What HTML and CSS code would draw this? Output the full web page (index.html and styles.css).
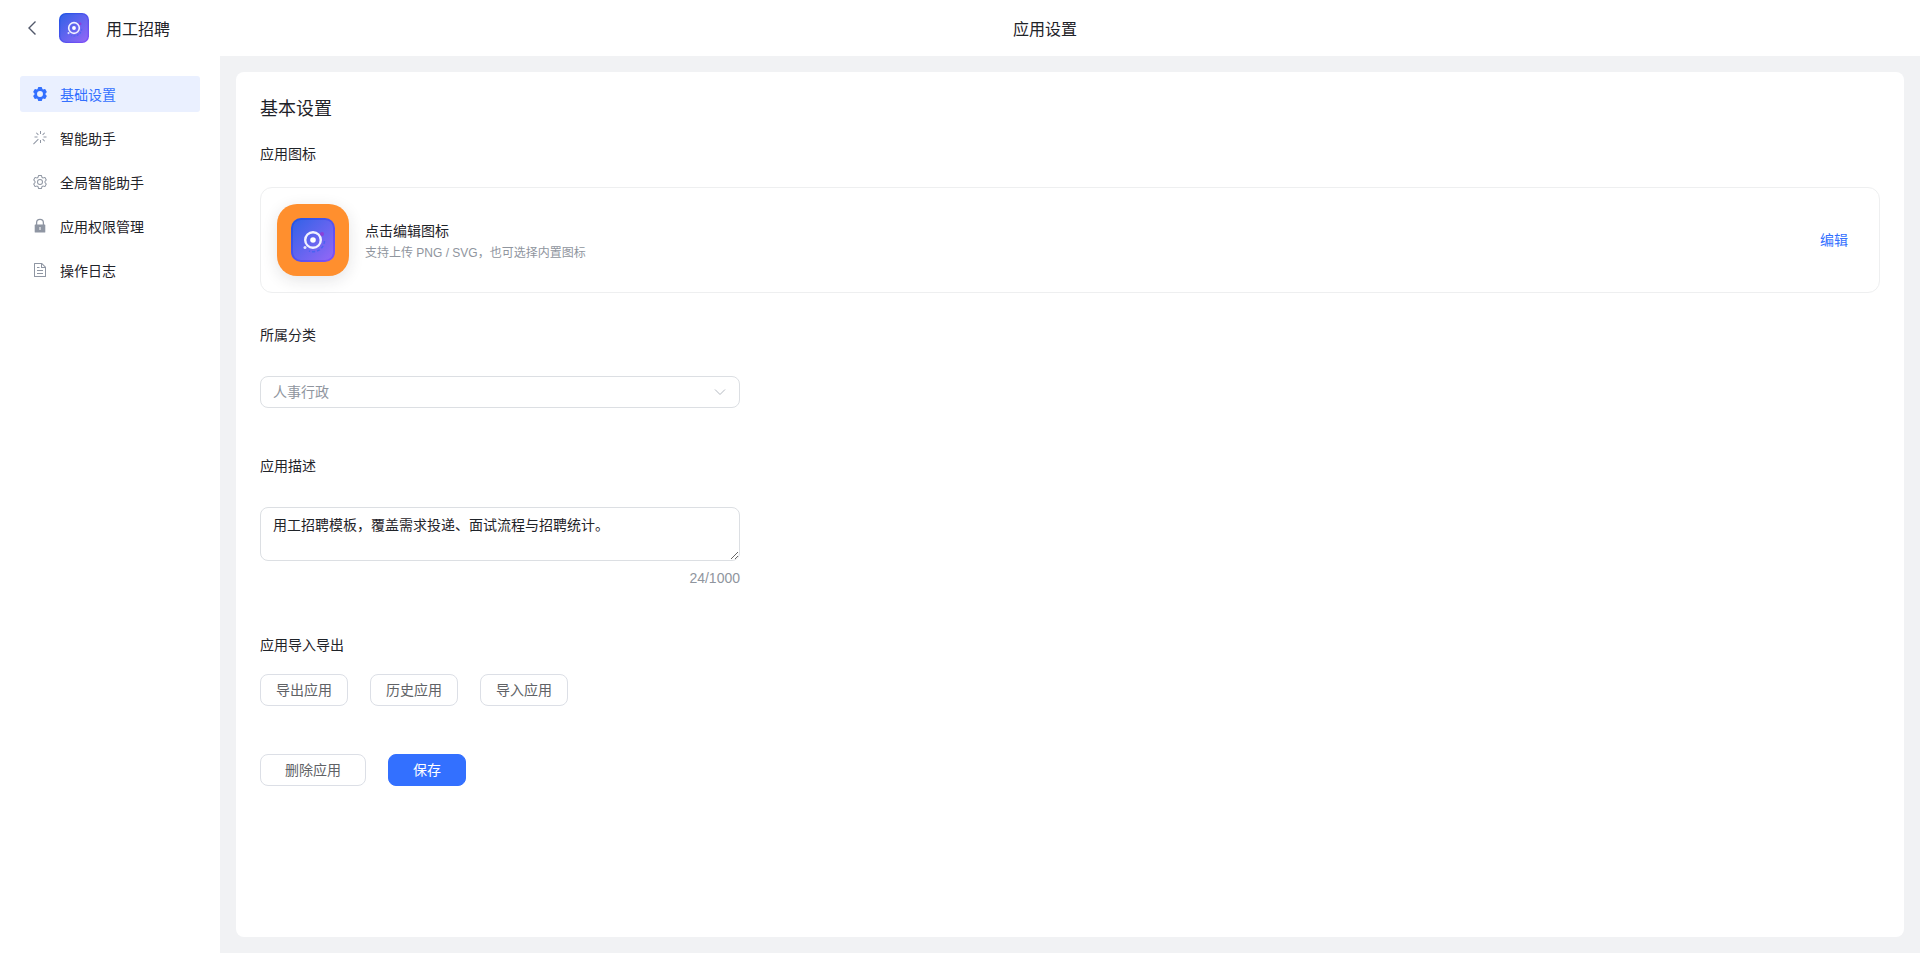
FILE: index.html
```html
<!DOCTYPE html>
<html lang="zh-CN">
<head>
<meta charset="utf-8">
<title>应用设置</title>
<link rel="stylesheet" href="styles.css">
</head>
<body>
<svg class="defs" aria-hidden="true">
  <defs>
    <linearGradient id="logo-fill" x1="0" y1="0" x2="1" y2="1">
      <stop offset="0" stop-color="#2457e6"/>
      <stop offset="1" stop-color="#8b5cf6"/>
    </linearGradient>
    <linearGradient id="logo-edge" x1="0" y1="0" x2="1" y2="1">
      <stop offset="0" stop-color="#1d55e4"/>
      <stop offset="1" stop-color="#8350f8"/>
    </linearGradient>
    <symbol id="logo" viewBox="0 0 44 44">
      <rect width="44" height="44" rx="10" fill="url(#logo-edge)"/>
      <rect x="2" y="2" width="40" height="40" rx="8" fill="url(#logo-fill)"/>
      <rect x="2" y="2" width="40" height="40" rx="8" fill="#fff" opacity=".07"/>
      <circle cx="31" cy="16" r="2" fill="#8b3fd9"/>
      <path d="M33.500 23A11.500 11.500 0 0 1 18 33" fill="none" stroke="#4a63f0" stroke-width="1.500" stroke-dasharray="3 2"/>
      <circle cx="22" cy="22" r="7.800" fill="none" stroke="#f1f2ff" stroke-width="2.400"/>
      <circle cx="22" cy="22" r="2.800" fill="#fff"/>
      <circle cx="14" cy="29.500" r="1.500" fill="#dfe3ff"/>
    </symbol>
  </defs>
</svg>
<header class="topbar">
  <div class="topbar-app">
    <button class="back" type="button" aria-label="返回">
      <svg width="16" height="16" viewBox="0 0 16 16"><path d="M11.500 1.500 5 8l6.500 6.500" fill="none" stroke="currentColor" stroke-width="1.400"/></svg>
    </button>
    <svg class="topbar-logo" width="30" height="30"><use href="#logo"/></svg>
    <span class="topbar-name">用工招聘</span>
  </div>
  <h1 class="topbar-title">应用设置</h1>
</header>
<div class="body">
  <nav class="sidebar">
    <a class="nav-item active" href="#basic">
      <svg class="nav-icon" viewBox="0 0 1024 1024"><path fill="currentColor" fill-rule="evenodd" d="M600.704 64a32 32 0 0 1 30.464 22.208l35.200 109.376c14.784 7.232 28.928 15.360 42.432 24.512l112.384-24.192a32 32 0 0 1 34.432 15.360L944.320 364.800a32 32 0 0 1-4.032 37.504l-77.120 85.120a357.120 357.120 0 0 1 0 49.024l77.120 85.248a32 32 0 0 1 4.032 37.504l-88.704 153.600a32 32 0 0 1-34.432 15.296L708.800 803.904c-13.440 9.088-27.648 17.280-42.368 24.512l-35.264 109.376A32 32 0 0 1 600.704 960H423.296a32 32 0 0 1-30.464-22.208L357.696 828.480a351.616 351.616 0 0 1-42.560-24.640l-112.320 24.256a32 32 0 0 1-34.432-15.360L79.680 659.200a32 32 0 0 1 4.032-37.504l77.120-85.248a357.120 357.120 0 0 1 0-48.896l-77.120-85.248A32 32 0 0 1 79.680 364.800l88.704-153.600a32 32 0 0 1 34.432-15.296l112.320 24.256c13.568-9.152 27.776-17.408 42.560-24.640l35.200-109.312A32 32 0 0 1 423.232 64H600.640zM512 322a190 190 0 1 0 0 380 190 190 0 0 0 0-380z"/></svg>
      <span class="nav-text">基础设置</span>
    </a>
    <a class="nav-item" href="#assistant">
      <svg class="nav-icon" viewBox="0 0 1024 1024"><path fill="currentColor" d="M512 64h64v192h-64V64zm0 576h64v192h-64V640zM160 480v-64h192v64H160zm576 0v-64h192v64H736zM249.856 199.040l45.248-45.184L430.848 289.600 385.600 334.848 249.856 199.104zM657.152 606.400l45.248-45.248 135.744 135.744-45.248 45.248L657.152 606.400zM114.048 923.200 68.800 877.952l316.800-316.800 45.248 45.248-316.800 316.800zM702.400 334.848 657.152 289.600l135.744-135.744 45.248 45.248L702.400 334.848z"/></svg>
      <span class="nav-text">智能助手</span>
    </a>
    <a class="nav-item" href="#global-assistant">
      <svg class="nav-icon" viewBox="0 0 1024 1024"><path fill="currentColor" d="M600.704 64a32 32 0 0 1 30.464 22.208l35.200 109.376c14.784 7.232 28.928 15.360 42.432 24.512l112.384-24.192a32 32 0 0 1 34.432 15.360L944.320 364.800a32 32 0 0 1-4.032 37.504l-77.120 85.120a357.120 357.120 0 0 1 0 49.024l77.120 85.248a32 32 0 0 1 4.032 37.504l-88.704 153.600a32 32 0 0 1-34.432 15.296L708.800 803.904c-13.440 9.088-27.648 17.280-42.368 24.512l-35.264 109.376A32 32 0 0 1 600.704 960H423.296a32 32 0 0 1-30.464-22.208L357.696 828.480a351.616 351.616 0 0 1-42.560-24.640l-112.320 24.256a32 32 0 0 1-34.432-15.360L79.680 659.200a32 32 0 0 1 4.032-37.504l77.120-85.248a357.120 357.120 0 0 1 0-48.896l-77.120-85.248A32 32 0 0 1 79.680 364.800l88.704-153.600a32 32 0 0 1 34.432-15.296l112.320 24.256c13.568-9.152 27.776-17.408 42.560-24.640l35.200-109.312A32 32 0 0 1 423.232 64H600.640zm-23.424 64H446.720l-36.352 113.088-24.512 11.968a294.113 294.113 0 0 0-34.816 20.096l-22.656 15.360-116.224-25.088-65.280 113.152 79.680 88.192-1.920 27.136a293.120 293.120 0 0 0 0 40.192l1.920 27.136-79.808 88.192 65.344 113.152 116.224-25.024 22.656 15.296a294.113 294.113 0 0 0 34.816 20.096l24.512 11.968L446.720 896h130.688l36.480-113.152 24.448-11.904a288.282 288.282 0 0 0 34.752-20.096l22.592-15.296 116.288 25.024 65.280-113.152-79.744-88.192 1.920-27.136a293.120 293.120 0 0 0 0-40.256l-1.920-27.136 79.808-88.128-65.344-113.152-116.288 24.960-22.592-15.232a287.616 287.616 0 0 0-34.752-20.096l-24.448-11.904L577.344 128zM512 320a192 192 0 1 1 0 384 192 192 0 0 1 0-384zm0 64a128 128 0 1 0 0 256 128 128 0 0 0 0-256z"/></svg>
      <span class="nav-text">全局智能助手</span>
    </a>
    <a class="nav-item" href="#permissions">
      <svg class="nav-icon" viewBox="0 0 16 16"><path d="M4.600 7V4.700a3.400 3.400 0 0 1 6.800 0V7" fill="none" stroke="currentColor" stroke-width="1.300"/><path fill="currentColor" fill-rule="evenodd" d="M3.300 6.500h9.400a.6.6 0 0 1 .6.600v6.900a.6.6 0 0 1-.6.600H3.300a.6.600 0 0 1-.6-.6V7.100a.6.6 0 0 1 .6-.6zm4.200 2.500v3h1V9z"/></svg>
      <span class="nav-text">应用权限管理</span>
    </a>
    <a class="nav-item" href="#logs">
      <svg class="nav-icon" viewBox="0 0 1024 1024"><path fill="currentColor" d="M832 384H576V128H192v768h640V384zm-26.496-64L640 154.496V320h165.504zM160 64h480l256 256v608a32 32 0 0 1-32 32H160a32 32 0 0 1-32-32V96a32 32 0 0 1 32-32zm160 448h384v64H320v-64zm0-192h160v64H320v-64zm0 384h384v64H320v-64z"/></svg>
      <span class="nav-text">操作日志</span>
    </a>
  </nav>
  <main class="main">
    <form class="card">
      <h2 class="card-title">基本设置</h2>
      <section class="section icon-section">
        <h3 class="label">应用图标</h3>
        <div class="icon-panel">
          <div class="app-icon"><svg width="44" height="44"><use href="#logo"/></svg></div>
          <div class="icon-text">
            <span class="icon-name">点击编辑图标</span>
            <span class="icon-hint">支持上传 PNG / SVG，也可选择内置图标</span>
          </div>
          <button class="link-btn" type="button">编辑</button>
        </div>
      </section>
      <section class="section field">
        <label class="label" for="category">所属分类</label>
        <div class="select-wrap">
          <select class="select" id="category"><option>人事行政</option></select>
          <svg class="caret" viewBox="0 0 14 14"><path d="m2 4.500 5 5 5-5" fill="none" stroke="currentColor"/></svg>
        </div>
      </section>
      <section class="section field">
        <label class="label" for="description">应用描述</label>
        <div class="textarea-wrap">
          <textarea class="textarea" id="description" rows="2" maxlength="1000">用工招聘模板，覆盖需求投递、面试流程与招聘统计。</textarea>
          <span class="count">24/1000</span>
        </div>
      </section>
      <section class="section transfer">
        <h3 class="label">应用导入导出</h3>
        <div class="btn-row">
          <button class="btn" type="button">导出应用</button>
          <button class="btn" type="button">历史应用</button>
          <button class="btn" type="button">导入应用</button>
        </div>
      </section>
      <div class="btn-row">
        <button class="btn btn-wide" type="button">删除应用</button>
        <button class="btn btn-wide btn-primary" type="submit">保存</button>
      </div>
    </form>
  </main>
</div>
</body>
</html>
```
FILE: styles.css
```css
* {
  box-sizing: border-box;
}

body {
  margin: 0;
  min-height: 100vh;
  display: flex;
  flex-direction: column;
  background: #fff;
  color: #1f2329;
  font: 14px/22px "Liberation Sans", "Noto Sans CJK SC", sans-serif;
}

h1, h2, h3 {
  margin: 0;
  font-weight: inherit;
}

button, select, textarea {
  font: inherit;
}

.defs {
  position: absolute;
  width: 0;
  height: 0;
}

.topbar {
  display: flex;
  align-items: center;
  height: 56px;
  font-size: 16px;
  line-height: 26px;
}

.topbar-app {
  display: flex;
  align-items: center;
  padding-left: 24px;
}

.topbar-name,
.topbar-title {
  padding-top: 3px;
}

.back {
  display: flex;
  padding: 0;
  border: 0;
  background: none;
  color: #51586a;
}

.topbar-logo {
  margin: 0 17px 0 19px;
}

.topbar-title {
  flex: 1;
  font-size: 16px;
  text-align: center;
}

.body {
  flex: 1;
  display: flex;
}

.sidebar {
  width: 220px;
  padding: 20px;
  display: flex;
  flex-direction: column;
  gap: 8px;
}

.nav-item {
  display: flex;
  align-items: center;
  gap: 12px;
  height: 36px;
  padding: 0 12px;
  border-radius: 3px;
  color: #1f2329;
  text-decoration: none;
}

.nav-text {
  padding-top: 2px;
}

.nav-icon {
  width: 16px;
  height: 16px;
  color: #8f96a3;
}

.nav-item.active,
.nav-item.active .nav-icon {
  color: #3370ff;
}

.nav-item.active {
  background: #eaf0ff;
}

.main {
  flex: 1;
  display: flex;
  padding: 16px;
  background: #f1f2f4;
}

.card {
  flex: 1;
  padding: 24px;
  border-radius: 8px;
  background: #fff;
}

.card-title {
  margin-bottom: 21px;
  font-size: 18px;
  line-height: 26px;
}

.label {
  display: block;
  font-size: 14px;
  line-height: 22px;
}

.icon-section {
  margin-bottom: 31px;
}

.icon-panel {
  display: flex;
  align-items: center;
  gap: 16px;
  margin-top: 22px;
  padding: 16px;
  border: 1px solid #eeeff0;
  border-radius: 12px;
}

.app-icon {
  display: flex;
  align-items: center;
  justify-content: center;
  width: 72px;
  height: 72px;
  border-radius: 20px;
  background: #ff8f2e;
  box-shadow: 0 4px 16px rgba(31, 35, 41, 0.12);
}

.icon-text {
  flex: 1;
  display: flex;
  flex-direction: column;
  padding-top: 3px;
}

.icon-hint {
  color: #8f959e;
  font-size: 12px;
  line-height: 22px;
}

.link-btn {
  padding: 4px 15px;
  border: 0;
  background: none;
  color: #3370ff;
}

.field {
  width: 480px;
  max-width: 100%;
}

.select-wrap {
  display: grid;
  align-items: center;
  margin: 30px 0 47px;
}

.select {
  grid-area: 1 / 1;
  width: 100%;
  height: 32px;
  padding: 0 12px;
  border: 1px solid #dcdfe3;
  border-radius: 8px;
  background: #fff;
  color: #8f959e;
  appearance: none;
}

.caret {
  grid-area: 1 / 1;
  justify-self: end;
  width: 14px;
  height: 14px;
  margin-right: 13px;
  color: #b4b9c1;
  pointer-events: none;
}

.textarea-wrap {
  display: flex;
  flex-direction: column;
  align-items: flex-end;
  margin: 30px 0 45px;
}

.textarea {
  display: block;
  width: 100%;
  height: 54px;
  padding: 6px 12px;
  border: 1px solid #dcdfe3;
  border-radius: 8px;
  background: #fff;
  color: #1f2329;
  resize: vertical;
}

.count {
  margin-top: 6px;
  color: #8f959e;
}

.transfer {
  margin-bottom: 48px;
}

.btn-row {
  display: flex;
  flex-wrap: wrap;
  gap: 22px;
}

.transfer .btn-row {
  margin-top: 18px;
}

.btn {
  height: 32px;
  padding: 0 15px;
  border: 1px solid #dcdfe6;
  border-radius: 8px;
  background: #fff;
  color: #606266;
}

.btn-wide {
  padding: 0 24px;
}

.btn-primary {
  border-color: #3370ff;
  background: #3370ff;
  color: #fff;
}
```
